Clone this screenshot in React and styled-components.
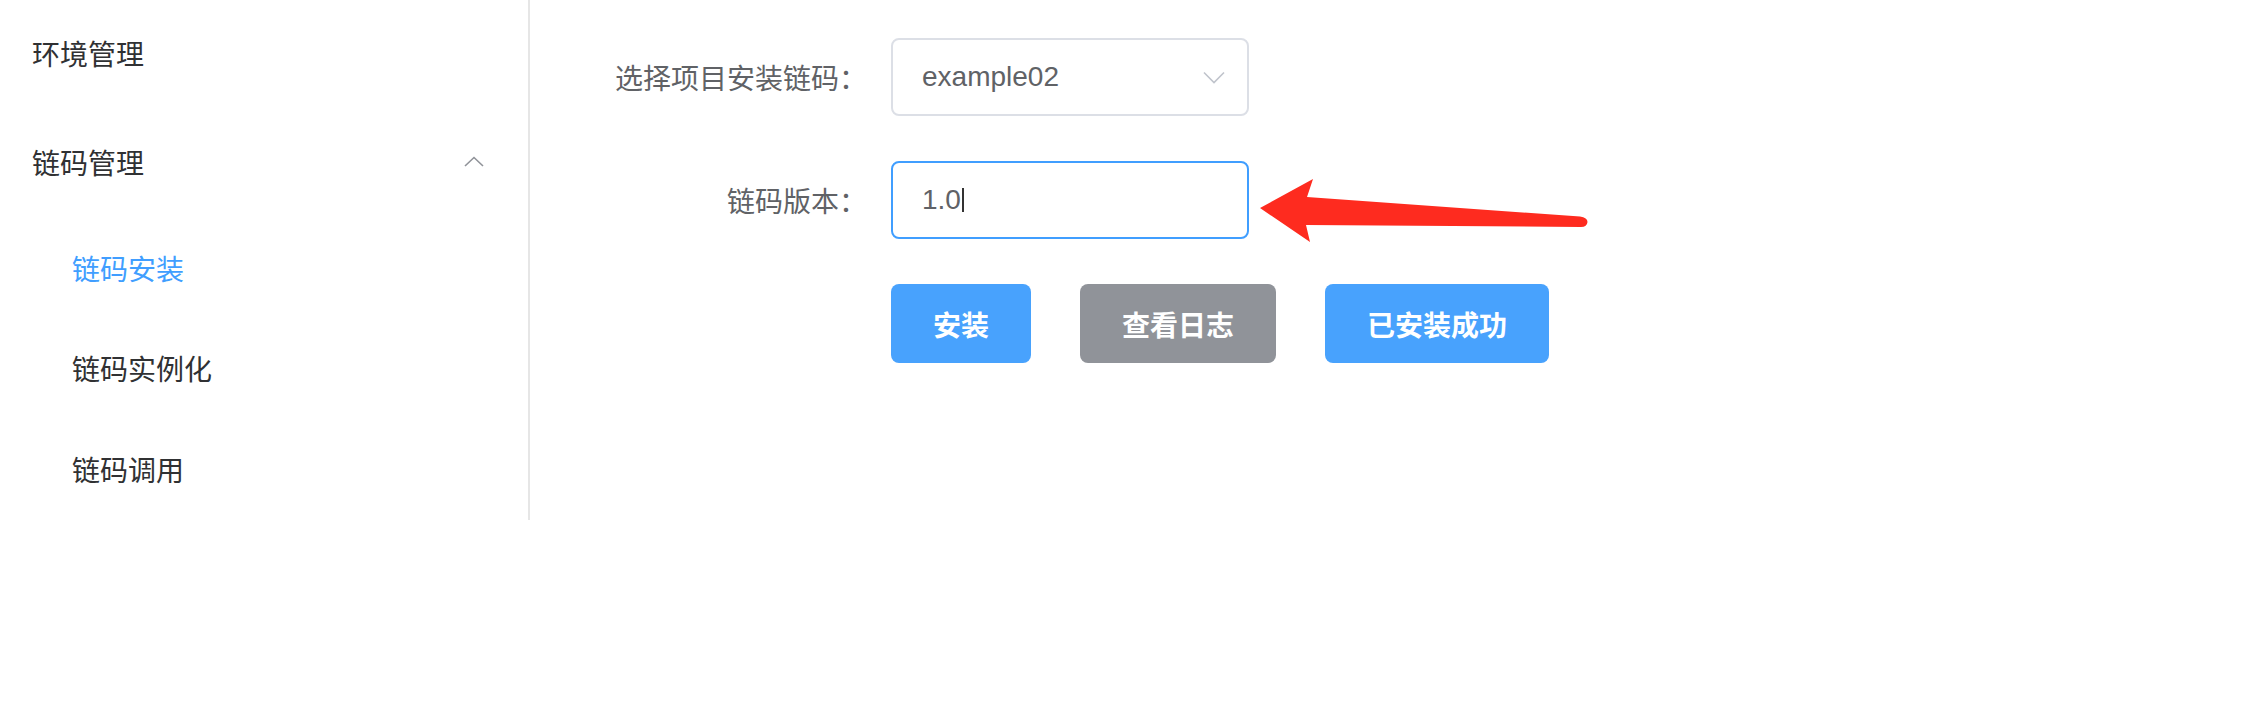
import React from "react";
import styled, { createGlobalStyle } from "styled-components";

const GlobalStyle = createGlobalStyle`
  body {
    margin: 0;
    background: #fff;
    font-family: "Liberation Sans", "Noto Sans CJK SC", sans-serif;
  }
`;

const Page = styled.div`
  display: flex;
  align-items: flex-start;
`;

const Sidebar = styled.ul`
  width: 530px;
  height: 520px;
  margin: 0;
  padding: 0;
  list-style: none;
  box-sizing: border-box;
  border-right: 2px solid #e6e6e6;
`;

const MenuItem = styled.li`
  height: ${(p) => p.$height}px;
  padding-left: ${(p) => p.$indent}px;
  padding-right: 44px;
  display: flex;
  align-items: center;
  justify-content: space-between;
  font-size: 28px;
  color: ${(p) => (p.$active ? "#409eff" : "#303133")};
  cursor: pointer;
`;

const Main = styled.div`
  flex: 1;
  position: relative;
  padding: 38px 0 0 37px;
`;

const Form = styled.div`
  display: flex;
  flex-direction: column;
  gap: 45px;
`;

const Row = styled.div`
  display: flex;
  align-items: center;
`;

const Label = styled.label`
  width: 324px;
  box-sizing: border-box;
  padding-right: 24px;
  text-align: right;
  font-size: 28px;
  color: #606266;
`;

const Field = styled.div`
  width: 358px;
  height: 78px;
  box-sizing: border-box;
  border: 2px solid ${(p) => (p.$focused ? "#409eff" : "#dcdfe6")};
  border-radius: 8px;
  padding: 0 22px 0 29px;
  display: flex;
  align-items: center;
  justify-content: space-between;
  font-size: 28px;
  color: #606266;
`;

const Value = styled.span`
  display: flex;
  align-items: center;
`;

const Caret = styled.span`
  display: inline-block;
  width: 2px;
  height: 24px;
  margin-left: 1px;
  background: #333;
`;

const Buttons = styled.div`
  display: flex;
  gap: 49px;
  margin-left: 324px;
`;

const Button = styled.button`
  height: 79px;
  padding: 0 42px;
  border: none;
  border-radius: 8px;
  background: ${(p) => p.$bg};
  color: #fff;
  font-family: inherit;
  font-size: 28px;
  font-weight: 700;
  cursor: pointer;
`;

const Arrow = styled.svg`
  position: absolute;
  left: 720px;
  top: 170px;
`;

const ChevronUp = () => (
  <svg width="20" height="12" viewBox="0 0 20 12">
    <path d="M1 10 L10 1.5 L19 10" fill="none" stroke="#909399" strokeWidth="1.6" />
  </svg>
);

const ChevronDown = () => (
  <svg width="22" height="13" viewBox="0 0 22 13">
    <path d="M1 1.5 L11 11.5 L21 1.5" fill="none" stroke="#c0c4cc" strokeWidth="1.6" />
  </svg>
);

export default function App() {
  return (
    <>
      <GlobalStyle />
      <Page>
        <Sidebar>
          <MenuItem $height={106} $indent={32}>环境管理</MenuItem>
          <MenuItem $height={112} $indent={32}>
            链码管理
            <ChevronUp />
          </MenuItem>
          <MenuItem $height={100} $indent={72} $active>链码安装</MenuItem>
          <MenuItem $height={100} $indent={72}>链码实例化</MenuItem>
          <MenuItem $height={102} $indent={72}>链码调用</MenuItem>
        </Sidebar>
        <Main>
          <Form>
            <Row>
              <Label>选择项目安装链码：</Label>
              <Field>
                <Value>example02</Value>
                <ChevronDown />
              </Field>
            </Row>
            <Row>
              <Label>链码版本：</Label>
              <Field $focused>
                <Value>
                  1.0
                  <Caret />
                </Value>
              </Field>
            </Row>
            <Buttons>
              <Button $bg="#48a2fd">安装</Button>
              <Button $bg="#909399">查看日志</Button>
              <Button $bg="#48a2fd">已安装成功</Button>
            </Buttons>
          </Form>
          {/* annotation arrow drawn over the page */}
          <Arrow width="350" height="90" viewBox="0 0 350 90">
            <path
              d="M10 38 L63 9 L57 27 L330 46.5 Q337.5 47.5 337.5 52 Q337 57 331 57 L56 55 L60 72 Z"
              fill="#fe2b1f"
            />
          </Arrow>
        </Main>
      </Page>
    </>
  );
}
